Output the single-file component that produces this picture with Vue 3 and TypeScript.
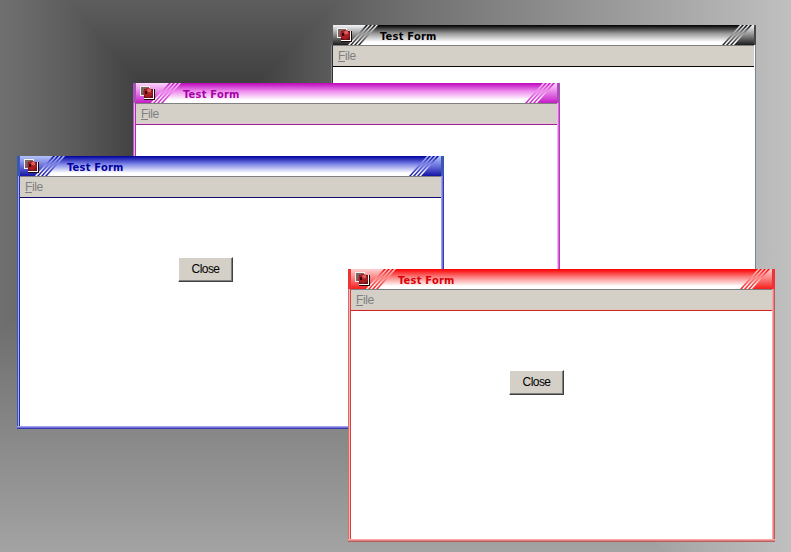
<script setup lang="ts">
interface FormWindow {
  id: string
  x: number
  y: number
  button: boolean
  stops: { panel: string[]; bar: string[] }
}

const windows: FormWindow[] = [
  { id: 'black', x: 331, y: 25, button: false, stops: { panel: ['#f4f6f8', '#8c8c8c', '#1c1c1c'], bar: ['#080808', '#989898', '#ffffff'] } },
  { id: 'magenta', x: 133, y: 83, button: false, stops: { panel: ['#fbd4fb', '#e67ae6', '#c41cc4'], bar: ['#c010c0', '#ee90ee', '#ffffff'] } },
  { id: 'blue', x: 17, y: 156, button: true, stops: { panel: ['#b4c4f8', '#6a70dc', '#1414a4'], bar: ['#0808a4', '#8088e8', '#ffffff'] } },
  { id: 'red', x: 348, y: 269, button: true, stops: { panel: ['#fcd0d0', '#fa7c7c', '#f81c1c'], bar: ['#fa0808', '#fc8484', '#ffffff'] } },
]

const slants = [2, 6, 10]

function slash(offset: number, width: number): string {
  return `${offset + 18},0 ${offset + 18 + width},0 ${offset + width},20 ${offset},20`
}
</script>

<template>
  <main class="desktop">
    <svg class="backdrop" width="791" height="552" viewBox="0 0 791 552" shape-rendering="crispEdges">
      <defs>
        <linearGradient id="bgTop" gradientUnits="userSpaceOnUse" x1="0" y1="143" x2="0" y2="0">
          <stop offset="0" stop-color="#2c2c2c" />
          <stop offset="0.43" stop-color="#404040" />
          <stop offset="1" stop-color="#5e5e5e" />
        </linearGradient>
        <linearGradient id="bgLeft" gradientUnits="userSpaceOnUse" x1="195" y1="0" x2="0" y2="0">
          <stop offset="0" stop-color="#2c2c2c" />
          <stop offset="0.284" stop-color="#404040" />
          <stop offset="0.66" stop-color="#5e5e5e" />
          <stop offset="1" stop-color="#707070" />
        </linearGradient>
        <linearGradient id="bgRight" gradientUnits="userSpaceOnUse" x1="195" y1="0" x2="791" y2="0">
          <stop offset="0" stop-color="#2c2c2c" />
          <stop offset="0.103" stop-color="#404040" />
          <stop offset="0.24" stop-color="#5e5e5e" />
          <stop offset="0.363" stop-color="#707070" />
          <stop offset="0.8" stop-color="#a6a6a6" />
          <stop offset="1" stop-color="#c0c0c0" />
        </linearGradient>
        <linearGradient id="bgBottom" gradientUnits="userSpaceOnUse" x1="0" y1="143" x2="0" y2="660">
          <stop offset="0" stop-color="#2c2c2c" />
          <stop offset="0.103" stop-color="#404040" />
          <stop offset="0.24" stop-color="#5e5e5e" />
          <stop offset="0.363" stop-color="#707070" />
          <stop offset="0.8" stop-color="#a4a4a4" />
          <stop offset="1" stop-color="#c0c0c0" />
        </linearGradient>
      </defs>
      <rect width="791" height="552" fill="url(#bgLeft)" />
      <polygon points="195,143 1195,-857 1348,1143" fill="url(#bgRight)" />
      <polygon points="195,143 -705,-857 1195,-857" fill="url(#bgTop)" />
      <polygon points="195,143 -842,1143 1348,1143" fill="url(#bgBottom)" />
    </svg>

    <section
      v-for="w in windows"
      :key="w.id"
      class="window"
      :class="w.id"
      :style="{ left: w.x + 'px', top: w.y + 'px' }"
    >
      <div class="edge left"><i /><i /><i /></div>
      <div class="inner">
        <header class="titlebar">
          <svg class="skin" width="421" height="20" viewBox="0 0 421 20">
            <defs>
              <linearGradient :id="w.id + 'Panel'" gradientUnits="userSpaceOnUse" x1="0" y1="0" x2="0" y2="20">
                <stop offset="0" :stop-color="w.stops.panel[0]" />
                <stop offset="0.5" :stop-color="w.stops.panel[1]" />
                <stop offset="1" :stop-color="w.stops.panel[2]" />
              </linearGradient>
              <linearGradient :id="w.id + 'Bar'" gradientUnits="userSpaceOnUse" x1="0" y1="0" x2="0" y2="20">
                <stop offset="0.03" :stop-color="w.stops.bar[0]" />
                <stop offset="0.42" :stop-color="w.stops.bar[1]" />
                <stop offset="0.85" :stop-color="w.stops.bar[2]" />
              </linearGradient>
            </defs>
            <rect width="421" height="20" :fill="`url(#${w.id}Bar)`" />
            <g :fill="`url(#${w.id}Panel)`">
              <polygon points="0,0 33,0 15,20 0,20" />
              <polygon v-for="s in slants" :key="s" :points="slash(15 + s, 2)" />
              <polygon v-for="s in slants" :key="'r' + s" :points="slash(387 + s, 2)" />
              <polygon points="419,0 421,0 421,20 401,20" />
            </g>
            <g shape-rendering="crispEdges">
              <rect x="4" y="3" width="10" height="10" fill="#f4f0f0" />
              <rect x="5" y="4" width="8" height="8" fill="#7c6460" />
              <rect x="8" y="6" width="11" height="11" fill="#1c0808" />
              <rect x="8" y="6" width="10" height="10" fill="#ffffff" />
              <rect x="8" y="6" width="9" height="9" fill="#641418" />
            </g>
            <circle cx="12" cy="9.8" r="4.7" fill="#a81c22" />
            <circle cx="13.2" cy="7.6" r="2" fill="#d86060" />
            <path d="M9 8h2v3h-2z" fill="#380408" />
          </svg>
          <span class="title">Test Form</span>
        </header>
        <nav class="menubar"><span class="item"><u>F</u>ile</span></nav>
        <div class="client">
          <button v-if="w.button" class="push" type="button">Close</button>
        </div>
      </div>
      <div class="edge right"><i /><i /><i /></div>
      <div class="foot"><i /><i /><i /></div>
    </section>
  </main>
</template>

<style>
body {
  margin: 0;
  overflow: hidden;
}
</style>

<style scoped>
.desktop {
  position: relative;
  width: 791px;
  height: 552px;
  overflow: hidden;
  font-family: "Liberation Sans", sans-serif;
}
.backdrop {
  display: block;
}
.window {
  position: absolute;
  display: grid;
  grid-template-columns: 3px 421px 3px;
  grid-template-rows: 270px 3px;
  width: 427px;
  height: 273px;
}
.black {
  grid-template-columns: 2px 421px 2px;
  width: 425px;
  --cap: #48484c;
  --outer: #84888c;
  --light: #303030;
  --dark: #202020;
  --r1: #ffffff;
  --r2: #748490;
  --r3: #b4b4b4;
  --rule: #080808;
  --blush: #d4d0c8;
  --text: #000000;
}
.magenta {
  --cap: #a850b8;
  --outer: #a860b8;
  --light: #eeb0f4;
  --dark: #b428b4;
  --r1: #f4b4f4;
  --r2: #d868dc;
  --r3: #b838bc;
  --rule: #942494;
  --blush: #e8c4d8;
  --text: #a800a8;
}
.blue {
  --cap: #3858b4;
  --outer: #3c54b4;
  --light: #98b0f8;
  --dark: #2828a8;
  --r1: #a0a0ec;
  --r2: #7474dc;
  --r3: #3838b0;
  --rule: #100870;
  --blush: #d4d0c8;
  --text: #0000a0;
}
.red {
  --cap: #ec3434;
  --outer: #d86c6c;
  --light: #fcb4b0;
  --dark: #d84040;
  --r1: #fca8a8;
  --r2: #e88080;
  --r3: #b06060;
  --rule: #c82828;
  --blush: #e8c4bc;
  --text: #d80008;
}
.edge {
  display: flex;
  overflow: hidden;
  border-top: 20px solid var(--cap);
}
.edge i {
  flex: 0 0 1px;
}
.black .left {
  border-top-color: transparent;
}
.left i:nth-child(1) { background: var(--outer); }
.left i:nth-child(2) { background: var(--light); }
.left i:nth-child(3) { background: var(--dark); }
.right i:nth-child(1) { background: var(--r1); }
.right i:nth-child(2) { background: var(--r2); }
.right i:nth-child(3) { background: var(--r3); }
.foot {
  grid-column: 1 / -1;
  display: grid;
  grid-template-rows: repeat(3, 1px);
}
.foot i:nth-child(1) { background: var(--r1); }
.foot i:nth-child(2) { background: var(--r2); }
.foot i:nth-child(3) { background: var(--r3); }
.inner {
  display: flex;
  flex-direction: column;
  min-width: 0;
  background: #ffffff;
}
.titlebar {
  display: grid;
  flex: 0 0 20px;
  height: 20px;
  overflow: hidden;
}
.skin,
.title {
  grid-area: 1 / 1;
}
.skin {
  display: block;
}
.title {
  z-index: 1;
  padding-left: 47px;
  font: bold 11px/23px "DejaVu Sans Condensed", "DejaVu Sans", sans-serif;
  letter-spacing: 0.25px;
  color: var(--text);
  white-space: nowrap;
}
.menubar {
  box-sizing: border-box;
  flex: 0 0 22px;
  height: 22px;
  padding-left: 5px;
  border-top: 1px solid #808080;
  border-bottom: 1px solid var(--rule);
  background: #d4d0c8;
  box-shadow: inset 0 -1px var(--blush);
  color: #808080;
  font-size: 12px;
  letter-spacing: -0.35px;
  line-height: 20px;
}
.client {
  flex: 1;
  padding: 59px 0 0 158px;
}
.push {
  display: block;
  box-sizing: border-box;
  width: 55px;
  height: 25px;
  padding: 0 0 1px;
  border: 1px solid;
  border-color: #ffffff #404040 #404040 #ffffff;
  border-radius: 0;
  background: #d4d0c8;
  box-shadow: inset -1px -1px #808080;
  color: #000000;
  font: 12px/20px "Liberation Sans", sans-serif;
  letter-spacing: -0.55px;
}
</style>
